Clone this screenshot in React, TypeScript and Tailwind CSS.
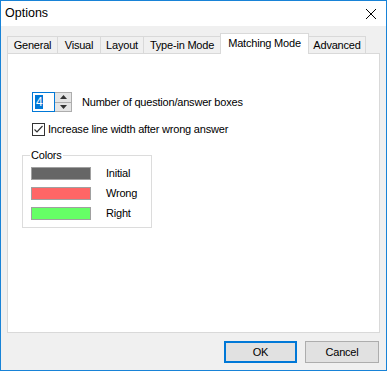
import React from 'react';

const tabs = [
    { label: 'General', w: 'w-[51px]' },
    { label: 'Visual', w: 'w-[44px]' },
    { label: 'Layout', w: 'w-[44px]' },
    { label: 'Type-in Mode', w: 'w-[78px]' },
    { label: 'Matching Mode', w: 'w-[89px]', active: true },
    { label: 'Advanced', w: 'w-[58px]' },
];

const swatches = [
    { label: 'Initial', color: 'bg-[#666666]' },
    { label: 'Wrong', color: 'bg-[#ff6666]' },
    { label: 'Right', color: 'bg-[#66ff66]' },
];

const SpinBox = () => (
    <div className="flex h-[20px]">
        <div className="w-[23px] h-full border border-[#0078d7] bg-white flex items-center pl-[2px]">
            <span className="bg-[#0078d7] text-white text-[12px] leading-[14px] px-px">4</span>
        </div>
        <div className="w-[17px] h-full flex flex-col border border-l-0 border-[#adadad]">
            <div className="flex-1 bg-[#e5e5e5] border-b border-[#adadad] flex items-center justify-center">
                <svg width="7" height="4" viewBox="0 0 7 4"><path d="M3.5 0 L7 4 L0 4 Z" fill="#333" /></svg>
            </div>
            <div className="flex-1 bg-[#e5e5e5] flex items-center justify-center">
                <svg width="7" height="4" viewBox="0 0 7 4"><path d="M0 0 L7 0 L3.5 4 Z" fill="#333" /></svg>
            </div>
        </div>
    </div>
);

const Checkbox = () => (
    <div className="w-[13px] h-[13px] border border-[#333] bg-white flex items-center justify-center">
        <svg width="11" height="11" viewBox="0 0 11 11">
            <path d="M1.5 5.5 L4 8 L9.5 2" stroke="#333" strokeWidth="1.2" fill="none" />
        </svg>
    </div>
);

export default function App() {
    return (
        <div
            className="w-[387px] h-[371px] flex flex-col border border-t-0 border-[#1883d7] bg-[#f0f0f0] text-[11px] tracking-[-0.2px] text-black"
            style={{ fontFamily: '"Liberation Sans", Arial, sans-serif' }}
        >
            {/* title bar */}
            <div className="h-[26px] bg-white flex items-center justify-between pl-[4px] pr-[9px] border-t border-[#1883d7]">
                <span className="text-[12.5px] tracking-normal">Options</span>
                <svg width="12" height="12" viewBox="0 0 12 12">
                    <path d="M1 1 L11 11 M11 1 L1 11" stroke="#000" strokeWidth="1" />
                </svg>
            </div>

            <div className="flex-1 flex flex-col px-[6px] pt-[7px]">
                {/* tabs */}
                <div className="flex items-end h-[20px]">
                    {tabs.map((t, i) =>
                        t.active ? (
                            <div
                                key={t.label}
                                className={`${t.w} h-[21px] -mb-px -ml-px relative z-10 bg-white border border-b-0 border-[#d9d9d9] flex items-center justify-center pb-[2px]`}
                            >
                                {t.label}
                            </div>
                        ) : (
                            <div
                                key={t.label}
                                className={`${t.w} h-[17px] ${i > 0 ? '-ml-px' : ''} border border-b-0 border-[#d9d9d9] flex items-center justify-center`}
                            >
                                {t.label}
                            </div>
                        )
                    )}
                </div>

                {/* panel */}
                <div className="h-[280px] bg-white border border-[#d9d9d9] pt-[38px] pl-[14px]">
                    <div className="ml-[10px] flex items-center">
                        <SpinBox />
                        <span className="ml-[10px]">Number of question/answer boxes</span>
                    </div>
                    <div className="ml-[10px] mt-[9px] flex items-center">
                        <Checkbox />
                        <span className="ml-[3px]">Increase line width after wrong answer</span>
                    </div>

                    <div className="relative mt-[17px] w-[130px] h-[73px] border border-[#dcdcdc] pt-[11px] pl-[8px]">
                        <span className="absolute -top-[8px] left-[7px] bg-white px-px leading-[14px]">Colors</span>
                        <div className="flex flex-col gap-[7px]">
                            {swatches.map((s) => (
                                <div key={s.label} className="flex items-center">
                                    <div className={`w-[60px] h-[13px] border border-[#a0a0a0] ${s.color}`} />
                                    <span className="ml-[15px] leading-[13px]">{s.label}</span>
                                </div>
                            ))}
                        </div>
                    </div>
                </div>

                {/* buttons */}
                <div className="flex justify-end gap-[8px] mt-[8px] pr-px">
                    <button className="w-[73px] h-[22px] bg-[#e1e1e1] border-2 border-[#0078d7]">OK</button>
                    <button className="w-[74px] h-[22px] bg-[#e1e1e1] border border-[#adadad]">Cancel</button>
                </div>
            </div>
        </div>
    );
}
